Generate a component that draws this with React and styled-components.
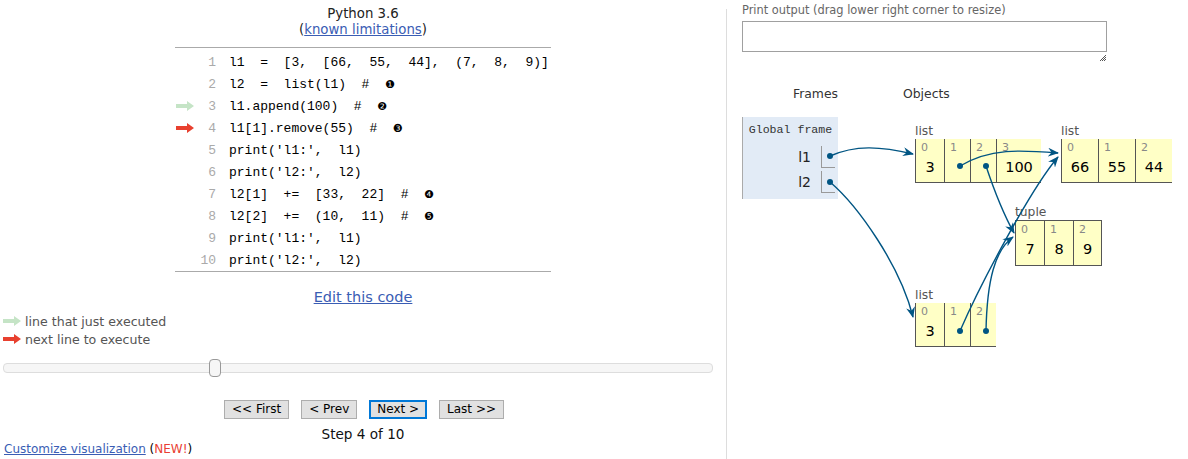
import React from "react";
import styled, { createGlobalStyle } from "styled-components";

const GlobalStyle = createGlobalStyle`
  html, body {
    margin: 0;
    padding: 0;
    background: #fff;
  }
  body {
    font-family: "DejaVu Sans", Verdana, sans-serif;
    color: #000;
  }
`;

const codeLines = [
  { text: "l1  =  [3,  [66,  55,  44],  (7,  8,  9)]" },
  { text: "l2  =  list(l1)  #  ", note: "❶" },
  { text: "l1.append(100)  #  ", note: "❷", arrow: "prev" },
  { text: "l1[1].remove(55)  #  ", note: "❸", arrow: "next" },
  { text: "print('l1:',  l1)" },
  { text: "print('l2:',  l2)" },
  { text: "l2[1]  +=  [33,  22]  #  ", note: "❹" },
  { text: "l2[2]  +=  (10,  11)  #  ", note: "❺" },
  { text: "print('l1:',  l1)" },
  { text: "print('l2:',  l2)" },
];

// heap objects, placed on the canvas (offsets from the Objects column)
const heap = [
  { kind: "list", x: 12, y: 6, cells: [{ v: "3", w: 29 }, { w: 26 }, { w: 26 }, { v: "100", w: 45 }] },
  { kind: "list", x: 158, y: 6, cells: [{ v: "66", w: 37 }, { v: "55", w: 37 }, { v: "44", w: 37 }] },
  { kind: "tuple", x: 112, y: 87, cells: [{ v: "7", w: 29 }, { v: "8", w: 29 }, { v: "9", w: 29 }] },
  { kind: "list", x: 12, y: 170, cells: [{ v: "3", w: 29 }, { w: 26 }, { w: 26 }] },
];

// pointer arrows in page coordinates
const pointers = [
  { from: [830, 156], d: "M830,156 C855,145 880,146 913,154" },
  { from: [830, 182], d: "M830,182 C858,206 900,265 913,317" },
  { from: [960, 166], d: "M960,166 C990,148 1020,150 1058,153" },
  { from: [986, 166], d: "M986,166 C994,190 1004,215 1014,233" },
  { from: [960, 331], d: "M960,331 C980,285 1030,190 1058,157" },
  { from: [986, 331], d: "M986,331 C987,280 995,250 1013,237" },
];

const ARROW_COLOR = "#005583";

const Page = styled.div`
  position: relative;
  display: flex;
  width: 1188px;
  height: 459px;
  overflow: hidden;
`;

const LeftPane = styled.div`
  width: 726px;
  display: flex;
  flex-direction: column;
  align-items: center;
`;

const Divider = styled.div`
  width: 1px;
  margin-top: 9px;
  background: #ddd;
  align-self: stretch;
`;

const RightPane = styled.div`
  flex: 1;
  padding-left: 15px;
  display: flex;
  flex-direction: column;
`;

const TitleBlock = styled.div`
  padding-top: 6px;
  text-align: center;
  font-size: 13.3px;
  line-height: 16px;
  color: #222;
`;

const Link = styled.a`
  color: #3a5db4;
  text-decoration: underline;
  cursor: pointer;
`;

const CodeTable = styled.div`
  margin-top: 9px;
  width: 376px;
  border-top: 1px solid #aaa;
  border-bottom: 1px solid #aaa;
  padding-top: 3px;
`;

const CodeRow = styled.div`
  display: flex;
  align-items: center;
  height: 22px;
`;

const ArrowCell = styled.div`
  width: 22px;
  display: flex;
  align-items: center;
  padding-left: 1px;
  box-sizing: border-box;
`;

const LineNo = styled.div`
  width: 19px;
  text-align: right;
  font-family: "Liberation Mono", "DejaVu Sans Mono", monospace;
  font-size: 13px;
  color: #aaa;
`;

const CodeText = styled.div`
  padding-left: 13px;
  font-family: "Liberation Mono", "DejaVu Sans Mono", monospace;
  font-size: 13px;
  white-space: pre;
  color: #000;
`;

const Note = styled.span`
  font-family: "DejaVu Sans", sans-serif;
  font-size: 11px;
`;

const EditLine = styled.div`
  margin-top: 15px;
  line-height: 20px;
  font-size: 14.5px;
`;

const Legend = styled.div`
  align-self: stretch;
  margin-top: 5px;
  padding-left: 3px;
  display: flex;
  flex-direction: column;
`;

const LegendRow = styled.div`
  display: flex;
  align-items: center;
  height: 18px;
  gap: 4px;
  font-size: 12.6px;
  color: #555;
`;

const SliderTrack = styled.div`
  position: relative;
  align-self: flex-start;
  margin: 15px 0 0 3px;
  width: 710px;
  height: 10px;
  box-sizing: border-box;
  border: 1px solid #ddd;
  border-radius: 4px;
  background: #f6f6f6;
`;

const SliderThumb = styled.div`
  position: absolute;
  left: 205px;
  top: -5px;
  width: 12px;
  height: 18px;
  box-sizing: border-box;
  border: 1px solid #999;
  border-radius: 4px;
  background: #f6f6f6;
`;

const ButtonRow = styled.div`
  margin-top: 27px;
  display: flex;
  gap: 12px;
  padding-left: 2px;
`;

const NavButton = styled.button`
  height: 19px;
  box-sizing: border-box;
  padding: 0 ${(p) => (p.focused ? "6px" : "7px")};
  border: ${(p) => (p.focused ? "2px solid #0078d7" : "1px solid #adadad")};
  background: #e1e1e1;
  font-family: "DejaVu Sans", Verdana, sans-serif;
  font-size: 12px;
  line-height: 15px;
  color: #000;
  border-radius: 0;
`;

const StepText = styled.div`
  margin-top: 7px;
  line-height: 16px;
  font-size: 13.6px;
  color: #111;
`;

const Customize = styled.div`
  align-self: flex-start;
  padding-left: 4px;
  line-height: 14px;
  font-size: 12px;
  color: #000;
`;

const NewTag = styled.span`
  color: #e93f34;
`;

const PrintLabel = styled.div`
  padding-top: 3px;
  line-height: 14px;
  font-size: 11.4px;
  color: #666;
`;

const OutputBox = styled.textarea`
  margin-top: 4px;
  width: 365px;
  height: 31px;
  box-sizing: border-box;
  border: 1px solid #a0a0a0;
  resize: none;
  display: block;
  padding: 0;
`;

const GripRow = styled.div`
  width: 365px;
  height: 12px;
  display: flex;
  justify-content: flex-end;
  align-items: center;
`;

const Viz = styled.div`
  margin-top: 22px;
  display: grid;
  grid-template-columns: 96px 65px 1fr;
  grid-template-rows: 16px auto;
  row-gap: 15px;
`;

const VizHeader = styled.div`
  grid-column: ${(p) => p.col};
  text-align: ${(p) => p.align || "left"};
  line-height: 16px;
  font-size: 12.4px;
  color: #333;
`;

const FrameBox = styled.div`
  grid-column: 1;
  align-self: start;
  height: 82px;
  box-sizing: border-box;
  border-left: 1px solid #aaa;
  background: #e2ebf6;
  padding-top: 5px;
  display: flex;
  flex-direction: column;
`;

const FrameTitle = styled.div`
  text-align: center;
  line-height: 16px;
  font-family: "Liberation Mono", "DejaVu Sans Mono", monospace;
  font-size: 11.6px;
  color: #333;
`;

const FrameVars = styled.div`
  margin-top: 8px;
  display: flex;
  flex-direction: column;
  gap: 3px;
`;

const VarRow = styled.div`
  display: flex;
  justify-content: flex-end;
  align-items: center;
  padding-right: 3px;
`;

const VarName = styled.div`
  font-size: 14px;
  color: #222;
  margin-right: 10px;
`;

const VarValue = styled.div`
  width: 14px;
  height: 22px;
  box-sizing: border-box;
  border-left: 1px solid #999;
  border-bottom: 1px solid #999;
`;

const HeapCanvas = styled.div`
  grid-column: 3;
  position: relative;
  height: 240px;
`;

const HeapObject = styled.div`
  position: absolute;
  left: ${(p) => p.x}px;
  top: ${(p) => p.y}px;
`;

const TypeLabel = styled.div`
  line-height: 16px;
  font-size: 12.3px;
  color: #555;
`;

const CellRow = styled.div`
  display: flex;
`;

const Cell = styled.div`
  width: ${(p) => p.w}px;
  height: ${(p) => (p.tuple ? 46 : 44)}px;
  box-sizing: border-box;
  background: #ffffc6;
  border-left: 1px solid #555;
  border-bottom: 1px solid #555;
  border-top: ${(p) => (p.tuple ? "1px solid #555" : "none")};
  border-right: ${(p) => (p.tuple && p.last ? "1px solid #555" : "none")};
  display: flex;
  flex-direction: column;
`;

const CellIndex = styled.div`
  padding: 2px 0 0 5px;
  line-height: 14px;
  font-size: 11px;
  color: #888;
`;

const CellValue = styled.div`
  margin-top: 3px;
  text-align: center;
  line-height: 18px;
  font-size: 14.5px;
  color: #000;
`;

const Overlay = styled.svg`
  position: absolute;
  left: 0;
  top: 0;
  pointer-events: none;
`;

function LineArrow({ color }) {
  return (
    <svg width="18" height="10" viewBox="0 0 18 10">
      <path d="M0,3 H11 V0 L18,5 L11,10 V7 H0 Z" fill={color} />
    </svg>
  );
}

const GREEN = "#c5e4c6";
const RED = "#e8402f";

function Code() {
  return (
    <CodeTable>
      {codeLines.map((line, i) => (
        <CodeRow key={i}>
          <ArrowCell>
            {line.arrow === "prev" && <LineArrow color={GREEN} />}
            {line.arrow === "next" && <LineArrow color={RED} />}
          </ArrowCell>
          <LineNo>{i + 1}</LineNo>
          <CodeText>
            {line.text}
            {line.note && <Note>{line.note}</Note>}
          </CodeText>
        </CodeRow>
      ))}
    </CodeTable>
  );
}

function Heap() {
  return (
    <HeapCanvas>
      {heap.map((obj, i) => (
        <HeapObject key={i} x={obj.x} y={obj.y}>
          <TypeLabel>{obj.kind}</TypeLabel>
          <CellRow>
            {obj.cells.map((c, j) => (
              <Cell
                key={j}
                w={c.w}
                tuple={obj.kind === "tuple"}
                last={j === obj.cells.length - 1}
              >
                <CellIndex>{j}</CellIndex>
                <CellValue>{c.v || ""}</CellValue>
              </Cell>
            ))}
          </CellRow>
        </HeapObject>
      ))}
    </HeapCanvas>
  );
}

function Pointers() {
  return (
    <Overlay width="1188" height="459">
      <defs>
        <marker
          id="head"
          markerUnits="userSpaceOnUse"
          markerWidth="11"
          markerHeight="9"
          refX="10"
          refY="4.5"
          orient="auto"
        >
          <path d="M0,0 L11,4.5 L0,9 L3.5,4.5 Z" fill={ARROW_COLOR} />
        </marker>
      </defs>
      {pointers.map((p, i) => (
        <g key={i}>
          <path
            d={p.d}
            fill="none"
            stroke={ARROW_COLOR}
            strokeWidth="1.4"
            markerEnd="url(#head)"
          />
          <circle cx={p.from[0]} cy={p.from[1]} r="3" fill={ARROW_COLOR} />
        </g>
      ))}
    </Overlay>
  );
}

export default function App() {
  return (
    <>
      <GlobalStyle />
      <Page>
        <LeftPane>
          <TitleBlock>
            <div>Python 3.6</div>
            <div>
              (<Link>known limitations</Link>)
            </div>
          </TitleBlock>
          <Code />
          <EditLine>
            <Link>Edit this code</Link>
          </EditLine>
          <Legend>
            <LegendRow>
              <LineArrow color={GREEN} />
              line that just executed
            </LegendRow>
            <LegendRow>
              <LineArrow color={RED} />
              next line to execute
            </LegendRow>
          </Legend>
          <SliderTrack>
            <SliderThumb />
          </SliderTrack>
          <ButtonRow>
            <NavButton>&lt;&lt; First</NavButton>
            <NavButton>&lt; Prev</NavButton>
            <NavButton focused>Next &gt;</NavButton>
            <NavButton>Last &gt;&gt;</NavButton>
          </ButtonRow>
          <StepText>Step 4 of 10</StepText>
          <Customize>
            <Link>Customize visualization</Link> (<NewTag>NEW!</NewTag>)
          </Customize>
        </LeftPane>
        <Divider />
        <RightPane>
          <PrintLabel>Print output (drag lower right corner to resize)</PrintLabel>
          <OutputBox readOnly value="" />
          <GripRow>
            <svg width="8" height="8" viewBox="0 0 8 8">
              <path d="M7,1 L1,7 M7,3 L3,7 M7,5 L5,7" stroke="#555" strokeWidth="1" />
            </svg>
          </GripRow>
          <Viz>
            <VizHeader col={1} align="right">Frames</VizHeader>
            <VizHeader col={3}>Objects</VizHeader>
            <FrameBox>
              <FrameTitle>Global frame</FrameTitle>
              <FrameVars>
                <VarRow>
                  <VarName>l1</VarName>
                  <VarValue />
                </VarRow>
                <VarRow>
                  <VarName>l2</VarName>
                  <VarValue />
                </VarRow>
              </FrameVars>
            </FrameBox>
            <Heap />
          </Viz>
        </RightPane>
      </Page>
      <Pointers />
    </>
  );
}
